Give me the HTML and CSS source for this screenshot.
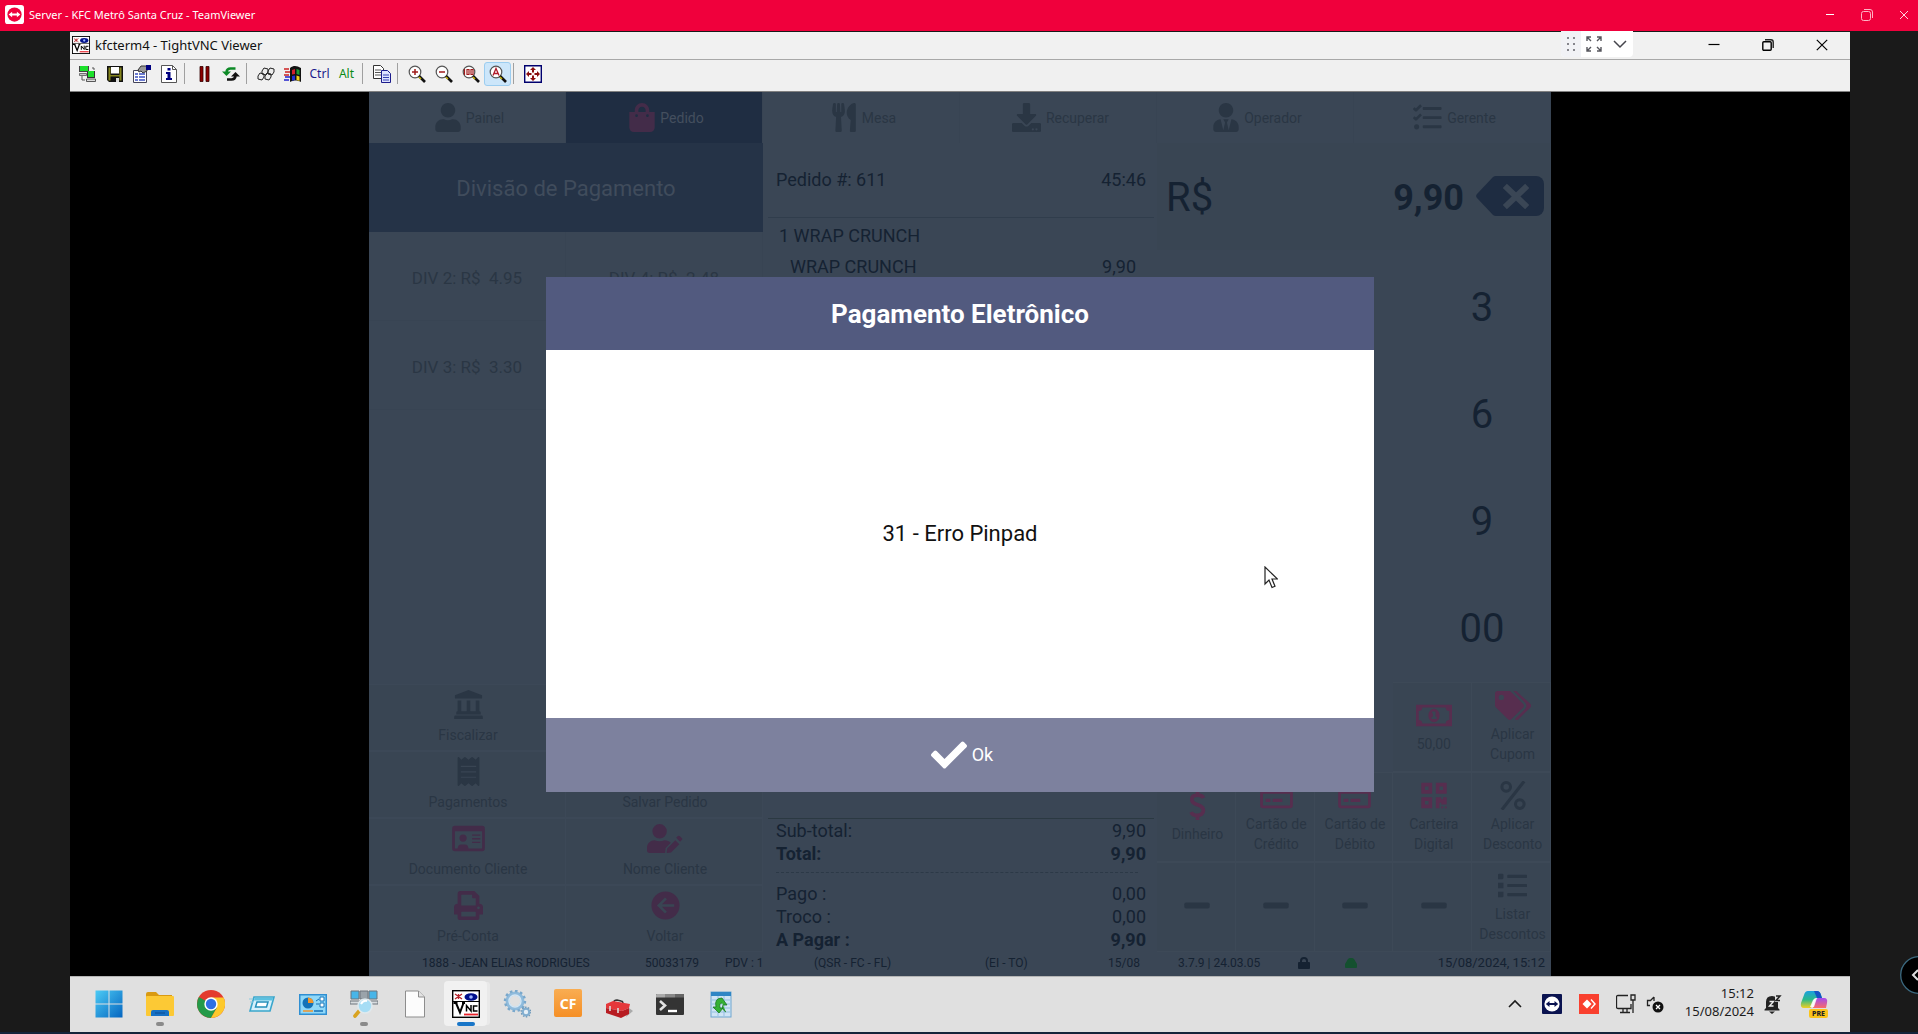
FILE: index.html
```html
<!DOCTYPE html>
<html lang="pt-BR">
<head>
<meta charset="utf-8">
<meta name="viewport" content="width=device-width, initial-scale=1">
<title>Server - KFC Metrô Santa Cruz - TeamViewer</title>
<link rel="stylesheet" href="styles.css">
</head>
<body>
<svg class="sprite" aria-hidden="true">
  <symbol id="i-user" viewBox="0 0 448 512"><path d="M224 256c70.7 0 128-57.3 128-128S294.7 0 224 0 96 57.3 96 128s57.3 128 128 128zm89.6 32h-16.7c-22.2 10.2-46.9 16-72.9 16s-50.6-5.8-72.9-16h-16.7C60.2 288 0 348.2 0 422.4V464c0 26.5 21.5 48 48 48h352c26.5 0 48-21.5 48-48v-41.6c0-74.2-60.2-134.4-134.4-134.4z"/></symbol>
  <symbol id="i-bag" viewBox="0 0 448 512"><path fill-rule="evenodd" d="M352 160v-32C352 57.4 294.6 0 224 0S96 57.4 96 128v32H0v272c0 44.200 35.800 80 80 80h288c44.200 0 80-35.800 80-80V160h-96zm-192-32c0-35.300 28.700-64 64-64s64 28.700 64 64v32H160v-32zm160 120a24 24 0 1 1 0-48 24 24 0 0 1 0 48zm-192 0a24 24 0 1 1 0-48 24 24 0 0 1 0 48z"/></symbol>
  <symbol id="i-fork" viewBox="0 0 416 512"><path d="M207.900 15.200c.8 4.700 16.100 94.500 16.100 128.800 0 52.300-27.800 89.600-68.900 104.600L168 486.700c.7 13.700-10.200 25.300-24 25.300H80c-13.700 0-24.700-11.500-24-25.300l12.900-238.100C27.700 233.600 0 196.200 0 144 0 109.600 15.300 19.900 16.100 15.200 19.300-5.100 61.400-5.400 64 16.300v141.200c1.300 3.400 15.100 3.200 16 0 1.400-25.300 7.900-139.200 8-141.800 3.300-20.800 44.700-20.800 47.900 0 .2 2.700 6.600 116.500 8 141.800.9 3.200 14.800 3.400 16 0V16.300c2.600-21.600 44.800-21.400 47.900-1.100zm119.200 285.700l-15 185.100c-1.200 14 9.900 26 23.900 26h56c13.300 0 24-10.700 24-24V24c0-13.200-10.700-24-24-24-82.500 0-221.400 178.500-64.900 300.900z"/></symbol>
  <symbol id="i-download" viewBox="0 0 512 512"><path fill-rule="evenodd" d="M216 0h80c13.300 0 24 10.700 24 24v168h87.700c17.800 0 26.700 21.500 14.100 34.100L269.700 378.300c-7.500 7.500-19.800 7.500-27.300 0L90.100 226.100c-12.600-12.600-3.700-34.100 14.100-34.100H192V24c0-13.300 10.700-24 24-24zm296 376v112c0 13.300-10.700 24-24 24H24c-13.300 0-24-10.700-24-24V376c0-13.300 10.700-24 24-24h146.700l49 49c20.100 20.100 52.500 20.100 72.600 0l49-49H488c13.300 0 24 10.700 24 24zm-124 88a20 20 0 1 0-40 0 20 20 0 0 0 40 0zm64 0a20 20 0 1 0-40 0 20 20 0 0 0 40 0z"/></symbol>
  <symbol id="i-tie" viewBox="0 0 448 512"><path d="M224 256c70.700 0 128-57.300 128-128S294.700 0 224 0 96 57.300 96 128s57.300 128 128 128zm95.800 32.600L272 480l-32-136 32-56h-96l32 56-32 136-47.800-191.400C56.900 292 0 350.300 0 422.400V464c0 26.500 21.500 48 48 48h352c26.500 0 48-21.500 48-48v-41.600c0-72.100-56.900-130.400-128.200-133.800z"/></symbol>
  <symbol id="i-tasks" viewBox="0 0 512 512"><path d="M188 72h300a16 16 0 0 1 16 16v20a16 16 0 0 1-16 16H188a16 16 0 0 1-16-16V88a16 16 0 0 1 16-16zm0 160h300a16 16 0 0 1 16 16v20a16 16 0 0 1-16 16H188a16 16 0 0 1-16-16v-20a16 16 0 0 1 16-16zm0 160h300a16 16 0 0 1 16 16v20a16 16 0 0 1-16 16H188a16 16 0 0 1-16-16v-20a16 16 0 0 1 16-16zM64 376a45 45 0 1 1 0 90 45 45 0 0 1 0-90z"/><path d="M12 90l40 38 90-88M12 250l40 38 90-88" fill="none" stroke="currentColor" stroke-width="46" stroke-linejoin="round"/></symbol>
  <symbol id="i-bank" viewBox="0 0 512 512"><path d="M256 0L496 92v44a16 16 0 0 1-16 16H32a16 16 0 0 1-16-16V92zM64 184h64v192h96V184h64v192h96V184h64v192a24 24 0 0 1 24 24v32H40v-32a24 24 0 0 1 24-24zM24 452h464a20 20 0 0 1 20 20v40H4v-40a20 20 0 0 1 20-20z"/></symbol>
  <symbol id="i-receipt" viewBox="0 0 384 512"><path fill-rule="evenodd" d="M358.400 3.200L320 48 265.600 3.200a15.900 15.900 0 0 0-19.200 0L192 48 137.600 3.200a15.900 15.900 0 0 0-19.200 0L64 48 25.600 3.200C15-4.700 0 2.800 0 16v480c0 13.200 15 20.700 25.600 12.800L64 464l54.400 44.800c5.700 4.300 13.500 4.300 19.200 0L192 464l54.400 44.800c5.700 4.300 13.500 4.300 19.200 0L320 464l38.400 44.800c10.500 7.900 25.600.4 25.600-12.800V16c0-13.200-15-20.700-25.600-12.800zM328 368H56v-20h272zm0-96H56v-20h272zm0-96H56v-20h272z"/></symbol>
  <symbol id="i-idcard" viewBox="0 0 576 512"><path fill-rule="evenodd" d="M48 32h480a48 48 0 0 1 48 48v352a48 48 0 0 1-48 48H48a48 48 0 0 1-48-48V80a48 48 0 0 1 48-48zm0 96v304h48c0-44 26-72 60-72h72c34 0 60 28 60 72h240V128zm144 56a64 64 0 1 1 0 128 64 64 0 0 1 0-128zm160 0h144v24H352zm0 64h144v24H352zm0 64h144v24H352z"/></symbol>
  <symbol id="i-useredit" viewBox="0 0 640 512"><path d="M224 256a128 128 0 1 0 0-256 128 128 0 0 0 0 256zm89 32c-60 22-118 22-178 0C60 288 0 348 0 422v42a48 48 0 0 0 48 48h274l10-88 92-92c-26-28-66-44-111-44zM358 434l-8 68a9 9 0 0 0 10 10l67-8 147-147-70-70zm271-174l-38-38a37 37 0 0 0-52 0l-20 20 70 70 20-20a37 37 0 0 0 20-32z"/></symbol>
  <symbol id="i-print" viewBox="0 0 512 512"><path fill-rule="evenodd" d="M112 0h246l90 90v134a64 64 0 0 1 64 64v112a16 16 0 0 1-16 16h-48v64a32 32 0 0 1-32 32H96a32 32 0 0 1-32-32v-64H16a16 16 0 0 1-16-16V288a64 64 0 0 1 64-64V48a48 48 0 0 1 48-48zm16 64v192h256V128h-48a16 16 0 0 1-16-16V64zm0 304v80h256v-80zm304-96a24 24 0 1 0 0 48 24 24 0 0 0 0-48z"/></symbol>
  <symbol id="i-back" viewBox="0 0 512 512"><circle cx="256" cy="256" r="248"/><path d="M264 130L138 256l126 126M150 256h260" fill="none" stroke="#394553" stroke-width="48"/></symbol>
  <symbol id="i-money" viewBox="0 0 640 512"><path fill-rule="evenodd" d="M0 64h640v384H0zm48 112v160c44 0 64 24 64 64h416c0-40 20-64 64-64V176c-44 0-64-24-64-64H112c0 40-20 64-64 64zm272-40a100 120 0 1 1 0 240 100 120 0 0 1 0-240zm-36 50v30h16v60h-24v40h92v-40h-20v-90z"/></symbol>
  <symbol id="i-tags" viewBox="0 0 640 512"><path fill-rule="evenodd" d="M498 226L286 14A48 48 0 0 0 252 0H48A48 48 0 0 0 0 48v204a48 48 0 0 0 14 34l212 212a48 48 0 0 0 68 0l204-204a48 48 0 0 0 0-68zM112 160a48 48 0 1 1 0-96 48 48 0 0 1 0 96zm514 134L422 498a48 48 0 0 1-68 0l181-180a78 78 0 0 0 0-112L330 0h34a48 48 0 0 1 34 14l228 212a48 48 0 0 1 0 68z"/></symbol>
  <symbol id="i-dollar" viewBox="0 0 288 512"><path d="M250 122C232 80 190 74 144 74c-60 0-100 26-100 76 0 56 44 76 100 94 60 18 104 40 104 98 0 56-44 88-104 88-54 0-96-14-112-58M144 0v80M144 430v82" fill="none" stroke="currentColor" stroke-width="66"/></symbol>
  <symbol id="i-card" viewBox="0 0 576 512"><path fill-rule="evenodd" d="M48 32h480a48 48 0 0 1 48 48v352a48 48 0 0 1-48 48H48a48 48 0 0 1-48-48V80a48 48 0 0 1 48-48zm0 192v208h480V224zm48 88h84v60H96zm124 0h170v60H220z"/></symbol>
  <symbol id="i-qr" viewBox="0 0 448 512"><path fill-rule="evenodd" d="M0 32h192v192H0zm64 64v64h64V96zM256 32h192v192H256zm64 64v64h64V96zM0 288h192v192H0zm64 64v64h64v-64zM256 288h96v32h32v-32h64v128h-96v-32h-32v96h-64zM352 448h32v32h-32zm64 0h32v32h-32z"/></symbol>
  <symbol id="i-percent" viewBox="0 0 448 512"><g fill="none" stroke="currentColor"><circle cx="104" cy="104" r="76" stroke-width="54"/><circle cx="344" cy="408" r="76" stroke-width="54"/><path d="M420 6L28 506" stroke-width="56"/></g></symbol>
  <symbol id="i-list" viewBox="0 0 512 512"><path d="M20 48h56a20 20 0 0 1 20 20v56a20 20 0 0 1-20 20H0V68a20 20 0 0 1 20-20zM0 208h96v96H0zM0 368h96v76a20 20 0 0 1-20 20H0zM176 68h324a12 12 0 0 1 12 12v32a12 12 0 0 1-12 12H176a12 12 0 0 1-12-12V80a12 12 0 0 1 12-12zm0 160h324a12 12 0 0 1 12 12v32a12 12 0 0 1-12 12H176a12 12 0 0 1-12-12v-32a12 12 0 0 1 12-12zm0 160h324a12 12 0 0 1 12 12v32a12 12 0 0 1-12 12H176a12 12 0 0 1-12-12v-32a12 12 0 0 1 12-12z"/></symbol>
  <symbol id="i-minus" viewBox="0 0 448 512"><rect y="204" width="448" height="104" rx="32"/></symbol>
  <symbol id="i-check" viewBox="0 0 512 512"><path d="M173.900 439.400l-166.400-166.400c-10-10-10-26.200 0-36.200l36.200-36.200c10-10 26.200-10 36.200 0L192 312.700 432.100 72.600c10-10 26.200-10 36.200 0l36.200 36.200c10 10 10 26.200 0 36.200l-294.400 294.400c-10 10-26.200 10-36.200 0z"/></symbol>
  <symbol id="i-vnc" viewBox="0 0 28 28"><rect x=".7" y=".7" width="26.600" height="26.600" fill="#fff" stroke="#000" stroke-width="1.400"/><path d="M3 4l7 5M3 9l7-5M6.500 4v5" stroke="#b5222b" stroke-width="1.300"/><ellipse cx="19" cy="7" rx="6.500" ry="3.800" fill="#00108c"/><circle cx="19" cy="7" r="1.800" fill="#9db4ff"/><path d="M1 11.500h26" stroke="#000"/><path d="M1.500 13h4M4 13l4 9.500 3.500-9.500M10 13h3" fill="none" stroke="#000" stroke-width="2"/><path d="M14.500 21.500v-6l4.500 5.500v-6M25.500 16h-4v5h4" fill="none" stroke="#000" stroke-width="1.500"/><path d="M12 24.500h14" stroke="#e8222b" stroke-width="1.800"/></symbol>
</svg>

<header class="tv-bar">
  <svg class="tv-logo" viewBox="0 0 20 20"><rect width="20" height="20" rx="3" fill="#fff"/><circle cx="10" cy="10" r="7.500" fill="#f0003c"/><path d="M3.800 10l3.700-3v2h5V7l3.700 3-3.700 3v-2h-5v2z" fill="#fff"/></svg>
  <h1 class="tv-title">Server - KFC Metrô Santa Cruz - TeamViewer</h1>
  <div class="tv-controls">
    <button type="button" aria-label="Minimizar"><svg viewBox="0 0 12 12"><path d="M2 5.500h8" stroke="#fff"/></svg></button>
    <button type="button" aria-label="Restaurar"><svg viewBox="0 0 12 12"><rect x=".5" y="2.500" width="9" height="9" rx="2" fill="none" stroke="#ffb3c4"/><path d="M3 .5h6a2.500 2.500 0 0 1 2.500 2.500v6" fill="none" stroke="#ffb3c4"/></svg></button>
    <button type="button" aria-label="Fechar"><svg viewBox="0 0 12 12"><path d="M2 2l8 8M10 2l-8 8" stroke="#ffd5de"/></svg></button>
  </div>
</header>

<main class="remote">
  <div class="tv-float">
    <span class="grip"><svg viewBox="0 0 10 16" width="10" height="16" fill="#85858c"><path d="M1 1h2v2H1zM7 1h2v2H7zM1 7h2v2H1zM7 7h2v2H7zM1 13h2v2H1zM7 13h2v2H7z"/></svg></span>
    <button type="button" aria-label="Tela cheia"><svg viewBox="0 0 16 16" width="16" height="16" fill="none" stroke="#55555c" stroke-width="1.400"><path d="M1 5V1h4M1 1l4 4M11 1h4v4M15 1l-4 4M1 11v4h4M1 15l4-4M15 11v4h-4M15 15l-4-4"/></svg></button>
    <button type="button" aria-label="Expandir"><svg viewBox="0 0 14 16" width="14" height="16" fill="none" stroke="#45454c" stroke-width="1.500"><path d="M1 5l6 6 6-6"/></svg></button>
  </div>

  <div class="vnc-title">
    <svg class="vnc-logo"><use href="#i-vnc"/></svg>
    <h2>kfcterm4 - TightVNC Viewer</h2>
    <div class="vnc-controls">
      <button type="button" aria-label="Minimizar"><svg viewBox="0 0 12 12"><path d="M.5 5.500h11" stroke="#000" stroke-width="1.200"/></svg></button>
      <button type="button" aria-label="Restaurar"><svg viewBox="0 0 12 12"><rect x=".8" y="2.800" width="8.400" height="8.400" rx="1" fill="none" stroke="#000" stroke-width="1.400"/><path d="M3 .8h6A2.200 2.200 0 0 1 11.200 3v6" fill="none" stroke="#222" stroke-width="1.400"/></svg></button>
      <button type="button" aria-label="Fechar"><svg viewBox="0 0 12 12"><path d="M.8.8l10.400 10.400M11.200.8L.8 11.200" stroke="#000" stroke-width="1.200"/></svg></button>
    </div>
  </div>

  <div class="vnc-tools">
    <button type="button" aria-label="Nova conexão"><svg viewBox="0 0 18 18"><path fill="#444" d="M0 1h10v6H0z"/><path fill="#1be02a" d="M1 1h8v5H1z"/><path fill="#c8c8c8" stroke="#444" stroke-width=".7" d="M.5 8.500h7v2h-7z"/><path fill="#333" d="M8 6h8v7H8z"/><path fill="#1be02a" d="M9 6h6v6H9z"/><path fill="#ddd" stroke="#333" stroke-width=".8" d="M7.500 14h9v2.500h-9z"/><path d="M3 11v4h3M13 3h2v2" fill="none" stroke="#555"/></svg></button>
    <button type="button" aria-label="Salvar"><svg viewBox="0 0 18 18"><path fill="#111" d="M1 1h16v16H3l-2-2z"/><path fill="#85851c" d="M2.500 2.500h2v13h-2zM13.500 2.500h2v13h-2zM4 10h10v1.500H4z"/><path fill="#fff" d="M5 2h8v6.500H5z"/><path fill="#ddd" d="M10 13h3v4h-3z"/></svg></button>
    <button type="button" aria-label="Opções"><svg viewBox="0 0 18 18"><path fill="#fff" stroke="#44445a" d="M.5 5.500h13v12H.5z"/><path d="M2 9h3M6 9h6M2 12h3M6 12h6M2 15h3M6 15h6" stroke="#3a4fc0" stroke-width="1.400"/><path fill="#999" stroke="#333" d="M5 5l3-4h6v5l-4 2-2-2-2 1z"/><path fill="#000080" d="M13 0h5v5h-5z"/></svg></button>
    <button type="button" aria-label="Informações"><svg viewBox="0 0 18 18"><path fill="#fff" stroke="#555" d="M1.500.5h11l4 4v13h-15z"/><path d="M12.500.5v4h4" fill="none" stroke="#555"/><path fill="#000080" d="M7.500 3h3v2.500h-3zM6 7h4.500v6H12v2H6v-2h1.500V9H6z"/></svg></button>
    <span class="sep"></span>
    <button type="button" aria-label="Pausar"><svg viewBox="0 0 18 18"><path fill="#8b0000" stroke="#300" stroke-width=".8" d="M5 1.500h3v15H5zM11 1.500h3v15h-3z"/></svg></button>
    <button type="button" aria-label="Atualizar"><svg viewBox="0 0 18 18"><path d="M13.500 3.500h-5Q5 3.500 4.500 7" fill="none" stroke="#0d8a26" stroke-width="2.600"/><path fill="#0d8a26" d="M0 6.500h9L4.500 11z"/><path d="M5 14.500h4.500q3.500 0 4-3.500" fill="none" stroke="#111" stroke-width="2.600"/><path fill="#111" d="M9 11.500h9L13.500 7z"/></svg></button>
    <span class="sep"></span>
    <button type="button" aria-label="Ctrl+Alt+Del"><svg viewBox="0 0 18 18"><g fill="#eee" stroke="#222" stroke-width="1"><path d="M5 6l2-3 4 1v3l-2 3-4-1zM11 6l2-3 4 1v3l-2 3-4-1zM1 11l2-3 4 1v3l-2 3-4-1zM8 11l2-3 4 1v3l-2 3-4-1z"/></g></svg></button>
    <button type="button" aria-label="Ctrl+Esc"><svg viewBox="0 0 18 18"><path fill="#111" d="M6 3c4-3 7-2 11 0v14c-4-2-7-2-11 0z"/><path fill="#d3212c" d="M8 5l3-1v5l-3 .5z"/><path fill="#1d9c32" d="M12.500 4l3 1v5l-3-1z"/><path fill="#2230d0" d="M8 11l3-.5v4.500l-3 .7z"/><path fill="#f2d21c" d="M12.500 10.500l3 1v4.500l-3-1z"/><path d="M0 4h5M1 7h5M0 10h5" stroke="#c22" stroke-width="1.600"/><path d="M1 12h5M0 15h5" stroke="#22c" stroke-width="1.600"/></svg></button>
    <button type="button" class="ctrl">Ctrl</button>
    <button type="button" class="alt">Alt</button>
    <span class="sep"></span>
    <button type="button" aria-label="Transferir arquivos"><svg viewBox="0 0 18 18"><path fill="#fff" stroke="#333" d="M.5.500h7l3 3v10H.5z"/><path d="M2 5h6M2 7.500h6M2 10h6" stroke="#555"/><path fill="#dfe3ff" stroke="#1b1b8c" d="M8.500 5.500h6l3 3v9h-9z"/><path d="M10 10h6M10 12.500h6M10 15h6" stroke="#3440b0"/></svg></button>
    <span class="sep"></span>
    <button type="button" aria-label="Ampliar"><svg viewBox="0 0 18 18"><circle cx="7" cy="7" r="5.800" fill="#fff" stroke="#555" stroke-width="1.200"/><path d="M11 11l6 6" stroke="#111" stroke-width="2.600"/><path d="M11 12l2 2" stroke="#c8b400" stroke-width="1.500"/><path d="M4 7h6M7 4v6" stroke="#a01c1c" stroke-width="1.500"/></svg></button>
    <button type="button" aria-label="Reduzir"><svg viewBox="0 0 18 18"><circle cx="7" cy="7" r="5.800" fill="#fff" stroke="#555" stroke-width="1.200"/><path d="M11 11l6 6" stroke="#111" stroke-width="2.600"/><path d="M11 12l2 2" stroke="#c8b400" stroke-width="1.500"/><path d="M4 7h6" stroke="#a01c1c" stroke-width="1.500"/></svg></button>
    <button type="button" aria-label="Zoom 100%"><svg viewBox="0 0 18 18"><circle cx="7" cy="7" r="5.800" fill="#fff" stroke="#555" stroke-width="1.200"/><path d="M11 11l6 6" stroke="#111" stroke-width="2.600"/><path d="M11 12l2 2" stroke="#c8b400" stroke-width="1.500"/><path d="M2.500 4v6M5 4.500h2v5H5zM9 4.500h2v5H9z" fill="none" stroke="#a01c1c" stroke-width="1.200"/></svg></button>
    <button type="button" class="on" aria-label="Zoom automático"><svg viewBox="0 0 18 18"><circle cx="7" cy="7" r="5.800" fill="#fff" stroke="#555" stroke-width="1.200"/><path d="M11 11l6 6" stroke="#111" stroke-width="2.600"/><path d="M11 12l2 2" stroke="#c8b400" stroke-width="1.500"/><path d="M4 10.500L7 3.500l3 7M5 8.500h4" fill="none" stroke="#b01c2c" stroke-width="1.300"/></svg></button>
    <span class="sep"></span>
    <button type="button" aria-label="Tela cheia"><svg viewBox="0 0 18 18"><path fill="#fff" stroke="#00006e" stroke-width="1.400" d="M.7.7h16.600v16.600H.7z"/><path fill="#8b1010" d="M9 2l3 3H10v2.500H8V5H6zM9 16l-3-3h2v-2.500h2V13h2zM2 9l3-3v2h2.500v2H5v2zM16 9l-3 3v-2h-2.500V8H13V6z"/></svg></button>
  </div>

  <div class="stage">
    <section class="pos">
      <nav class="tabs">
        <button type="button"><svg class="ico w7"><use href="#i-user"/></svg>Painel</button>
        <button type="button" class="active"><svg class="ico w7 pink"><use href="#i-bag"/></svg>Pedido</button>
        <button type="button"><svg class="ico w7"><use href="#i-fork"/></svg>Mesa</button>
        <button type="button"><svg class="ico w8"><use href="#i-download"/></svg>Recuperar</button>
        <button type="button"><svg class="ico w7"><use href="#i-tie"/></svg>Operador</button>
        <button type="button"><svg class="ico w8"><use href="#i-tasks"/></svg>Gerente</button>
      </nav>

      <div class="columns">
        <div class="split">
          <h3>Divisão de Pagamento</h3>
          <div class="divs">
            <button type="button">DIV 2: R$&nbsp; 4.95</button>
            <button type="button">DIV 4: R$&nbsp; 2.48</button>
            <button type="button">DIV 3: R$&nbsp; 3.30</button>
          </div>
          <div class="actions">
            <button type="button"><svg class="ico w8"><use href="#i-bank"/></svg>Fiscalizar</button>
            <span></span>
            <button type="button"><svg class="ico w6"><use href="#i-receipt"/></svg>Pagamentos</button>
            <button type="button"><svg class="ico w6"><use href="#i-receipt"/></svg>Salvar Pedido</button>
            <button type="button"><svg class="ico w9 pink"><use href="#i-idcard"/></svg>Documento Cliente</button>
            <button type="button"><svg class="ico w10 pink"><use href="#i-useredit"/></svg>Nome Cliente</button>
            <button type="button"><svg class="ico w8 pink"><use href="#i-print"/></svg>Pré-Conta</button>
            <button type="button"><svg class="ico w8 pink"><use href="#i-back"/></svg>Voltar</button>
          </div>
        </div>

        <div class="order">
          <div class="order-head"><span>Pedido #: 611</span><span>45:46</span></div>
          <div class="items">
            <div class="item"><span>1 WRAP CRUNCH</span></div>
            <div class="item sub"><span>WRAP CRUNCH</span><span>9,90</span></div>
          </div>
          <div class="totals">
            <div><span>Sub-total:</span><span>9,90</span></div>
            <div class="strong"><span>Total:</span><span>9,90</span></div>
            <hr>
            <div><span>Pago :</span><span>0,00</span></div>
            <div><span>Troco :</span><span>0,00</span></div>
            <div class="strong"><span>A Pagar :</span><span>9,90</span></div>
          </div>
        </div>

        <div class="pay">
          <div class="amount">
            <span class="cur">R$</span><strong>9,90</strong>
            <button type="button" aria-label="Apagar"><svg viewBox="0 0 68 40" width="68" height="40"><path d="M20 0h40a8 8 0 0 1 8 8v24a8 8 0 0 1-8 8H20a5 5 0 0 1-3-1L1 22a3 3 0 0 1 0-4L17 1a5 5 0 0 1 3-1z" fill="#1e2c41"/><path d="M31 12l18 17M49 12L31 29" stroke="#3a4655" stroke-width="6" stroke-linecap="square"/></svg></button>
          </div>
          <div class="keys">
            <button type="button">3</button>
            <button type="button">6</button>
            <button type="button">9</button>
            <button type="button">00</button>
          </div>
          <div class="methods">
            <button type="button" class="fourth"><svg class="ico w10 rose"><use href="#i-money"/></svg>50,00</button>
            <button type="button"><svg class="ico w10 rose"><use href="#i-tags"/></svg>Aplicar<br>Cupom</button>
            <button type="button"><svg class="ico w45 rose"><use href="#i-dollar"/></svg>Dinheiro</button>
            <button type="button"><svg class="ico w9 rose"><use href="#i-card"/></svg>Cartão de<br>Crédito</button>
            <button type="button"><svg class="ico w9 rose"><use href="#i-card"/></svg>Cartão de<br>Débito</button>
            <button type="button"><svg class="ico w7 rose"><use href="#i-qr"/></svg>Carteira<br>Digital</button>
            <button type="button"><svg class="ico w7"><use href="#i-percent"/></svg>Aplicar<br>Desconto</button>
            <button type="button" aria-label="Vazio"><svg class="ico w7"><use href="#i-minus"/></svg></button>
            <button type="button" aria-label="Vazio"><svg class="ico w7"><use href="#i-minus"/></svg></button>
            <button type="button" aria-label="Vazio"><svg class="ico w7"><use href="#i-minus"/></svg></button>
            <button type="button" aria-label="Vazio"><svg class="ico w7"><use href="#i-minus"/></svg></button>
            <button type="button"><svg class="ico w8"><use href="#i-list"/></svg>Listar<br>Descontos</button>
          </div>
        </div>
      </div>

      <footer class="status">
        <span>1888 - JEAN ELIAS RODRIGUES</span>
        <span>50033179</span>
        <span>PDV : 1</span>
        <span>(QSR - FC - FL)</span>
        <span>(EI - TO)</span>
        <span>15/08</span>
        <span>3.7.9 | 24.03.05</span>
        <svg viewBox="0 0 12 12" width="12" height="12"><rect y="5" width="12" height="7" rx="1" fill="#152232"/><path d="M3 6V4a3 3 0 0 1 6 0v2" fill="none" stroke="#152232" stroke-width="2"/></svg>
        <svg viewBox="0 0 14 12" width="14" height="12"><path d="M1 7l3-5q1-1 2-1h2q1 0 2 1l3 5v3q0 1-1 1H2q-1 0-1-1z" fill="#14502f"/></svg>
        <span class="now">15/08/2024, 15:12</span>
      </footer>

      <div class="overlay">
        <div class="modal" role="dialog" aria-labelledby="modal-title">
          <h3 id="modal-title">Pagamento Eletrônico</h3>
          <p>31 - Erro Pinpad</p>
          <button type="button"><svg width="36" height="36" fill="#fff"><use href="#i-check"/></svg>Ok</button>
        </div>
      </div>
      <svg class="cursor" viewBox="0 0 14 23" width="14" height="23"><path d="M1 1v17l4-4 3 7.500 3-1.300-3-7.200h5.500z" fill="#fff" stroke="#222" stroke-width="1.200"/></svg>
    </section>
  </div>

  <footer class="taskbar">
    <div class="apps">
      <button type="button" aria-label="Iniciar"><svg viewBox="0 0 28 28"><defs><linearGradient id="g-win" x1="0" y1="0" x2="1" y2="1"><stop offset="0" stop-color="#4ccbf5"/><stop offset="1" stop-color="#0565c0"/></linearGradient></defs><path fill="url(#g-win)" d="M.5.500h13v13H.5zM14.500.500h13v13h-13zM.5 14.500h13v13H.5zM14.500 14.500h13v13h-13z"/></svg></button>
      <button type="button" class="run" aria-label="Explorador"><svg viewBox="0 0 28 28"><path d="M0 4a2 2 0 0 1 2-2h8l3 3h13v6H0z" fill="#d99a12"/><rect y="6" width="28" height="20" rx="1" fill="#fcc935"/><path d="M5 26v-4a2 2 0 0 1 2-2h14a2 2 0 0 1 2 2v4z" fill="#1670c4"/><path d="M9 23h10" stroke="#0c4a90"/></svg></button>
      <button type="button" aria-label="Chrome"><svg viewBox="0 0 28 28"><circle cx="14" cy="14" r="14" fill="#e33b2e"/><path d="M14 14L1.900 7A14 14 0 0 0 14 28l6-10.500z" fill="#249a49"/><path d="M14 14L20 17.500 14 28A14 14 0 0 0 26.500 7.500H14z" fill="#fdc92c"/><circle cx="14" cy="14" r="6.700" fill="#fff"/><circle cx="14" cy="14" r="5.200" fill="#2f6fe4"/></svg></button>
      <button type="button" aria-label="Executar"><svg viewBox="0 0 28 28"><path d="M6 7h20l-4 14H2z" fill="#d5f0fb" stroke="#3aa6cc" stroke-width="1.600"/><path d="M6.500 8h18.500l-.6 2.500H6z" fill="#5cc1e0"/><path d="M9 12h11l-1.500 5H7.500z" fill="#fff" stroke="#2590bb" stroke-width="1.500"/><path d="M1 9h4M2 12h3" stroke="#8ccbe0"/></svg></button>
      <button type="button" aria-label="Painel de Controle"><svg viewBox="0 0 28 28"><rect y="4" width="28" height="21" fill="#2f8fd2"/><rect x="1.500" y="5.500" width="25" height="18" fill="#8fd8f8"/><circle cx="9" cy="13" r="5.500" fill="#1472b8"/><path d="M9 13V7.500a5.500 5.500 0 0 1 5.500 5.500z" fill="#f0952b"/><path d="M17 11l3-2M17 14h3" stroke="#1472b8"/><path d="M21 7h4v4h-4zM21 13h4v4h-4z" fill="#fff" stroke="#1472b8"/><path d="M4 21h10" stroke="#f0952b" stroke-width="1.500"/><path d="M15 21h9" stroke="#1472b8" stroke-width="1.500"/></svg></button>
      <button type="button" class="run" aria-label="Monitor de rede"><svg viewBox="0 0 28 28"><g stroke="#6d757d"><path d="M1 1h8v8H1zM19 1h8v8h-8z" fill="#48b5e8"/><path d="M10 1h8v8h-8z" fill="#9aa3aa"/><path d="M0 11h10v3H0zM18 11h10v3H18z" fill="#d8dcdf"/></g><path d="M10 20l-5 6" stroke="#d9a320" stroke-width="3.600" stroke-linecap="round"/><circle cx="15" cy="16" r="7" fill="#a6ddf5" stroke="#dfe9ee" stroke-width="1.600"/><path d="M11 14q2-4 6-3" stroke="#fff" stroke-width="2" fill="none"/></svg></button>
      <button type="button" aria-label="Documento"><svg viewBox="0 0 28 28"><path d="M4.500 1h13l6 6v20h-19z" fill="#fcfcfc" stroke="#8d8d8d"/><path d="M17.500 1v6h6" fill="#e3e3e3" stroke="#8d8d8d"/></svg></button>
      <button type="button" class="run current" aria-label="TightVNC"><svg><use href="#i-vnc"/></svg></button>
      <button type="button" aria-label="Serviços"><svg viewBox="0 0 28 28"><circle cx="12" cy="11" r="7.500" fill="none" stroke="#8fbbdc" stroke-width="4"/><circle cx="12" cy="11" r="10" fill="none" stroke="#79a8cc" stroke-width="2.400" stroke-dasharray="2.600 2.600"/><circle cx="12" cy="11" r="6" fill="none" stroke="#d3e6f4" stroke-width="1.400"/><circle cx="23" cy="22" r="3.300" fill="#e6eff6" stroke="#82aed0" stroke-width="2.200"/><circle cx="23" cy="22" r="4.800" fill="none" stroke="#6b97b8" stroke-width="1.200" stroke-dasharray="1.500 1.500"/></svg></button>
      <button type="button" class="cf" aria-label="CF">CF</button>
      <button type="button" aria-label="Ferramentas"><svg viewBox="0 0 28 28"><path d="M9 14v-2q0-2 3-2l4 1q2 0 2 3" fill="none" stroke="#333" stroke-width="1.600"/><path d="M24 18l4 3-7 6z" fill="#aaa"/><path d="M1 14l7-3 17 3-1 4-7 3-16-3z" fill="#e5383b"/><path d="M1 18l16 3 7-3v6l-8 4-15-5z" fill="#b71c22"/><path d="M5 16v5M13 18v5" stroke="#ddd" stroke-width="1.600"/></svg></button>
      <button type="button" aria-label="Terminal"><svg viewBox="0 0 28 28"><rect y="4" width="28" height="21" rx="1" fill="#343434"/><path d="M0 5a1 1 0 0 1 1-1h8v3.500H0z" fill="#aaa"/><path d="M9 4h10v3.500H9z" fill="#888"/><path d="M19 4h8a1 1 0 0 1 1 1v2.500h-9z" fill="#666"/><path d="M4 11l5 4.500L4 20" fill="none" stroke="#e2e2e2" stroke-width="2.600"/><path d="M12 21h9" stroke="#fff" stroke-width="2.400"/></svg></button>
      <button type="button" aria-label="Restaurar arquivos"><svg viewBox="0 0 28 28"><rect x="4" y="2" width="20" height="25" fill="#cfe4f5" stroke="#6fa6cf"/><path d="M4 2h20v4H4z" fill="#2f86c5"/><path d="M5 10h18M5 14h18M5 18h18M5 22h18M11 6v20M17 6v20" stroke="#94bfe0"/><path d="M19 22q-5-3-3-7h4l-5-7q-8 0-6 9H6l6 6 4-5h-3q-1-5 2-5" fill="#35b135" stroke="#1c7a22" stroke-width=".8"/></svg></button>
    </div>
    <div class="tray">
      <button type="button" class="tray-btn" aria-label="Ícones ocultos"><svg viewBox="0 0 20 20" width="20" height="20"><path d="M4 13l6-6 6 6" fill="none" stroke="#1c1c1c" stroke-width="1.600"/></svg></button>
      <button type="button" class="tray-btn" aria-label="TeamViewer"><svg viewBox="0 0 20 20" width="20" height="20"><rect width="20" height="20" rx="1" fill="#0a1350"/><circle cx="10" cy="10" r="7.600" fill="#fff"/><path d="M3.800 10l3.700-3v2h5V7l3.700 3-3.700 3v-2h-5v2z" fill="#0a1350"/></svg></button>
      <button type="button" class="tray-btn" aria-label="AnyDesk"><svg viewBox="0 0 20 20" width="20" height="20"><rect width="20" height="20" fill="#f9402f"/><path d="M8 5.500l4.500 4.500L8 14.500 3.500 10z" fill="#fff"/><path d="M11.500 6l1-1 4.500 5-4.500 5-1-1 3.500-4z" fill="#fff"/></svg></button>
      <button type="button" class="tray-btn" aria-label="Rede"><svg viewBox="0 0 20 20" width="20" height="20" fill="none" stroke="#222" stroke-width="1.300"><path d="M12 1.500H2q-1.500 0-1.500 1.500v10q0 1.500 1.500 1.500h13V10M7 15v3M11 15v3M4 18.500h10M15 1h4v5h-4zM17 6v13"/></svg></button>
      <button type="button" class="tray-btn narrow" aria-label="Som"><svg viewBox="0 0 18 18" width="18" height="18"><path d="M8 2L4.500 5.500H1.500v5H4M8 2v4" fill="none" stroke="#222" stroke-width="1.300"/><circle cx="12" cy="12" r="5.500" fill="#111"/><path d="M10 10l4 4M14 10l-4 4" stroke="#fff" stroke-width="1.300"/></svg></button>
      <div class="clock"><time>15:12</time><time>15/08/2024</time></div>
      <button type="button" class="bell" aria-label="Notificações"><svg viewBox="0 0 18 20" width="18" height="20"><path d="M2 14V8q0-6 6-6 6 0 6 6v6l1.500 1.500v1H.5v-1z" fill="#222"/><path d="M5 17.500h6l-3 2.500z" fill="#222"/><path d="M5.500 7.500h4l-4 4.500h4" fill="none" stroke="#eee" stroke-width="1.400"/><path d="M11 0h7v8h-7z" fill="#e0e0e0"/><path d="M12 2h4l-4 4.500h4" fill="none" stroke="#222" stroke-width="1.500"/></svg></button>
      <button type="button" class="copilot" aria-label="Copilot"><svg viewBox="0 0 28 28" width="28" height="28"><defs><linearGradient id="g-cp1" x1="0" y1="0" x2="0" y2="1"><stop offset="0" stop-color="#1a9fe0"/><stop offset=".5" stop-color="#2bb98b"/><stop offset="1" stop-color="#f3d021"/></linearGradient><linearGradient id="g-cp2" x1="0" y1="0" x2="0" y2="1"><stop offset="0" stop-color="#a24bf0"/><stop offset="1" stop-color="#fb6a66"/></linearGradient></defs><path d="M8 1h9q3 0 4 4l1 3h-5q-3 0-4 4l-2 6H4q-4 0-3-5l3-8q1-4 4-4z" fill="url(#g-cp1)"/><path d="M14 1h3q3 0 4 4l1 3h-5z" fill="#1552c4"/><path d="M18 8h6q4 0 3 5l-1 5H13l2-7q1-3 3-3z" fill="url(#g-cp2)"/><path d="M13 10q1-2 4-2l-3 9h-4z" fill="#fff" opacity=".85"/></svg><span>PRE</span></button>
    </div>
  </footer>

  <button type="button" class="side-handle" aria-label="Abrir painel"><svg viewBox="0 0 38 38" width="38" height="38"><circle cx="19" cy="19" r="18.300" fill="#000" stroke="#3c6a80" stroke-width="1.300"/><path d="M18 14l-5 5 5 5" fill="none" stroke="#ddd" stroke-width="2"/></svg></button>
</main>
</body>
</html>
```
FILE: styles.css
```css
* { box-sizing: border-box; }

body {
  margin: 0;
  min-height: 100vh;
  display: flex;
  flex-direction: column;
  background: #1a1a1a;
  font-family: "Noto Sans", "Open Sans", sans-serif;
  overflow-x: hidden;
}

button {
  margin: 0;
  padding: 0;
  border: 0;
  background: none;
  font: inherit;
  color: inherit;
  display: flex;
  align-items: center;
  justify-content: center;
}

h1, h2, h3, p { margin: 0; font-weight: 400; }

.sprite { display: none; }

/* TeamViewer title bar */
.tv-bar {
  height: 31px;
  padding: 0 0 2px 5px;
  display: flex;
  align-items: center;
  background: #f0003c;
  color: #fff;
}
.tv-logo { width: 19px; height: 19px; margin-right: 5px; }
.tv-title { font-size: 11px; line-height: 16px; }
.tv-controls { margin-left: auto; display: flex; }
.tv-controls button { width: 37px; height: 31px; }
.tv-controls button:last-child { width: 33px; padding-left: 4px; }
.tv-controls svg { width: 12px; height: 12px; }

.remote {
  position: relative;
  flex: 1;
  display: flex;
  flex-direction: column;
  padding: 1px 68px 0 70px;
  border-bottom: 2px solid #14243a;
  overflow: hidden;
}

.tv-float {
  position: absolute;
  top: 0;
  right: 285px;
  display: flex;
  height: 26px;
  background: #fff;
  border-radius: 0 0 4px 4px;
  overflow: hidden;
}
.tv-float .grip {
  width: 20px;
  display: flex;
  align-items: center;
  justify-content: center;
  background: #f1f2f6;
}
.tv-float button { width: 26px; }

/* TightVNC window */
.vnc-title {
  height: 27px;
  padding: 0 1px 2px 2px;
  display: flex;
  align-items: center;
  background: #f1f1f1;
}
.vnc-logo { width: 18px; height: 18px; margin-right: 5px; }
.vnc-title h2 { font-size: 13px; line-height: 18px; color: #111; }
.vnc-controls { margin-left: auto; display: flex; }
.vnc-controls button { width: 54px; height: 25px; }
.vnc-controls svg { width: 12px; height: 12px; }

.vnc-tools {
  height: 33px;
  padding: 0 0 4px 4px;
  display: flex;
  align-items: center;
  background: #f0f0f0;
  border-top: 1px solid #a8a8a8;
  border-bottom: 1px solid #808080;
}
.vnc-tools button { width: 27px; height: 24px; font-size: 12px; }
.vnc-tools svg { width: 18px; height: 18px; }
.vnc-tools .sep { width: 8px; height: 21px; border-left: 1px solid #a0a0a0; margin-left: 2px; margin-right: -2px; }
.vnc-tools .on { background: #cce6fa; border: 1px solid #9ccdf0; border-radius: 3px; }
.vnc-tools .ctrl { color: #1a1a8c; }
.vnc-tools .alt { color: #0a8a14; }

.stage {
  flex: 1;
  display: grid;
  grid-template-columns: 299fr 1182fr 299fr;
  background: #000;
}

/* Point-of-sale screen */
.pos {
  grid-column: 2;
  position: relative;
  display: flex;
  flex-direction: column;
  background: #3a4655;
  color: #2a3644;
  font-family: Roboto, "Liberation Sans", sans-serif;
  font-size: 14px;
  line-height: 20px;
}
.tabs {
  height: 51px;
  display: grid;
  grid-template-columns: repeat(6, 1fr);
}
.tabs button { gap: 5px; padding-left: 5px; border-right: 1px solid #384453; }
.tabs .active { background: #1f2d42; color: #444f5e; }

.ico { height: 29px; fill: currentColor; flex: none; }
.w45 { width: 17px; }
.w6 { width: 23px; }
.w7 { width: 26px; }
.w8 { width: 29px; }
.w9 { width: 33px; }
.w10 { width: 36px; }
.pink { color: #432c49; }
.rose { color: #572e4f; }

.columns {
  flex: 1;
  display: grid;
  grid-template-columns: repeat(3, 1fr);
}

.split { display: flex; flex-direction: column; }
.split h3 {
  height: 89px;
  padding-top: 2px;
  display: flex;
  align-items: center;
  justify-content: center;
  background: #253347;
  color: #404c5c;
  font-size: 22px;
}
.divs {
  flex: 1;
  display: grid;
  grid-template-columns: 1fr 1fr;
  grid-auto-rows: 89px;
  font-size: 17px;
}
.divs button { padding-top: 4px; border: 1px solid #384453; border-width: 0 1px 1px 0; }
.actions {
  display: grid;
  grid-template-columns: 1fr 1fr;
  grid-auto-rows: 67px;
}
.actions button, .methods button { flex-direction: column; }
.actions button {
  gap: 6px;
  padding-left: 2px;
  background: #394553;
  border: 1px solid #3c4857;
  border-width: 1px 1px 1px 0;
}

.order {
  padding: 0 3px 0 5px;
  display: flex;
  flex-direction: column;
  color: #152232;
  font-size: 18px;
  line-height: 23px;
}
.order-head, .item, .totals div { display: flex; justify-content: space-between; }
.order-head {
  height: 75px;
  padding: 0 8px 2px 8px;
  align-items: center;
  border-bottom: 1px solid #303d4c;
}
.items { flex: 1; padding: 2px 18px 0 11px; }
.item { padding: 4px 0; }
.item.sub { padding-left: 11px; }
.totals {
  padding: 0 8px 1px 8px;
  border-top: 1px solid #2b3942;
}
.totals .strong { font-weight: 700; }
.totals hr {
  margin: 7px 8px 9px 0;
  border: 0;
  border-top: 1px dashed #2c3947;
}

.pay { display: flex; flex-direction: column; }
.amount {
  height: 107px;
  padding: 0 7px 2px 9px;
  display: flex;
  align-items: center;
  background: #394553;
  color: #152232;
}
.amount .cur { flex: 1; padding-top: 4px; font-size: 40px; line-height: 48px; }
.amount strong { margin-right: 12px; padding-top: 4px; font-size: 36px; line-height: 44px; }
.keys {
  flex: 1;
  padding: 4px 4px 0 0;
  display: grid;
  grid-template-columns: repeat(3, 1fr);
  grid-template-rows: repeat(4, 1fr);
  font-size: 40px;
  color: #152232;
}
.keys button { grid-column: 3; }
.methods {
  display: grid;
  grid-template-columns: repeat(5, 1fr);
  grid-auto-rows: 90px;
}
.methods button {
  padding-left: 3px;
  background: #394553;
  border: 1px solid #3d4957;
  border-width: 1px 1px 1px 0;
}
.methods .fourth { grid-column: 4; }
.methods .ico { margin-bottom: 4px; }

.status {
  height: 24px;
  padding: 0 6px 2px 53px;
  display: grid;
  grid-template-columns: 223fr 80fr 89fr 171fr 123fr 70fr 120fr 46fr 60fr 141fr;
  align-items: center;
  white-space: nowrap;
  color: #152232;
  font-size: 12px;
  line-height: 16px;
}
.status .now { justify-self: end; font-size: 13px; }

.overlay {
  position: absolute;
  inset: 0;
  display: grid;
  place-items: center;
}
.modal {
  width: 70%;
  height: 58%;
  min-height: 515px;
  display: grid;
  grid-template-rows: 73px 1fr 74px;
  background: #fff;
  color: #111;
}
.modal h3, .modal p { display: flex; align-items: center; justify-content: center; }
.modal h3 { padding-top: 2px; background: #525a7f; color: #fff; font-size: 26px; font-weight: 700; }
.modal p { font-size: 22px; }
.modal button { gap: 5px; padding-left: 4px; background: #7d819e; color: #fff; font-size: 18px; }

.cursor { position: absolute; left: 76%; top: 54%; margin: -3px 0 0 -3px; }

/* Windows taskbar */
.taskbar {
  height: 56px;
  padding: 0 22px 2px 13px;
  display: flex;
  align-items: center;
  justify-content: space-between;
  background: #e0e0e0;
  border-top: 1px solid #b5b5b5;
}
.apps { display: flex; }
.apps button {
  position: relative;
  width: 43px;
  height: 45px;
  margin: 0 4px;
}
.apps svg { width: 28px; height: 28px; }
.apps .run::after {
  content: "";
  position: absolute;
  bottom: 0;
  left: 50%;
  width: 8px;
  height: 4px;
  margin-left: -4px;
  border-radius: 2px;
  background: #8a8a8a;
}
.apps .current { background: #f1f1f1; border-radius: 4px; box-shadow: 4px 0 0 -1px #e9e9e9; }
.apps .current::after { width: 18px; margin-left: -9px; background: #1976c8; }
.apps .cf {
  width: 28px;
  height: 28px;
  margin: 8px 11px 8px 12px;
  border-radius: 2px;
  background: linear-gradient(#f9ad52, #f58f26);
  color: #fff;
  font-size: 14px;
  font-weight: 700;
}
.tray { display: flex; align-items: center; }
.tray-btn { width: 37px; height: 40px; }
.tray-btn.narrow { width: 22px; }
.clock {
  width: 88px;
  padding-bottom: 3px;
  display: flex;
  flex-direction: column;
  text-align: right;
  font-size: 13px;
  line-height: 18px;
  color: #1c1c1c;
}
.bell { width: 38px; height: 40px; }
.copilot { position: relative; width: 28px; height: 28px; margin-left: 8px; }
.copilot span {
  position: absolute;
  right: 0;
  bottom: 0;
  padding: 0 3px;
  border-radius: 2px;
  background: #fbc41a;
  color: #222;
  font-size: 7px;
  font-weight: 800;
  line-height: 9px;
}

.side-handle { position: absolute; right: -20px; bottom: 38px; }
```
